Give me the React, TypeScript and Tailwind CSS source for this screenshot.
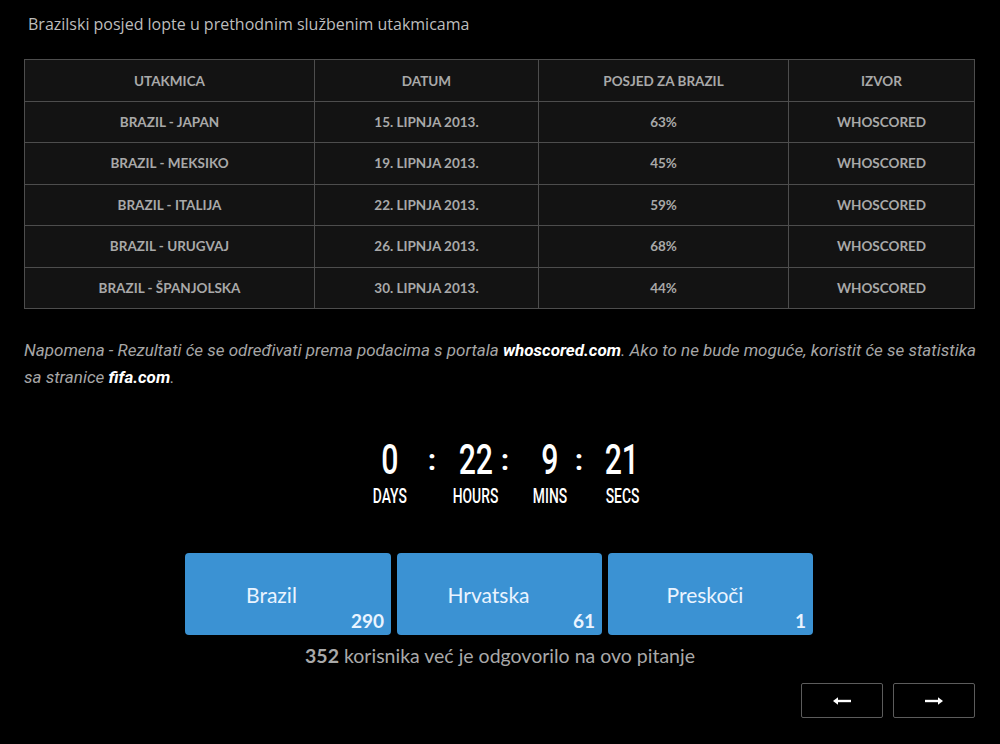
import React from "react";

const rows = [
  ["BRAZIL - JAPAN", "15. LIPNJA 2013.", "63%", "WHOSCORED"],
  ["BRAZIL - MEKSIKO", "19. LIPNJA 2013.", "45%", "WHOSCORED"],
  ["BRAZIL - ITALIJA", "22. LIPNJA 2013.", "59%", "WHOSCORED"],
  ["BRAZIL - URUGVAJ", "26. LIPNJA 2013.", "68%", "WHOSCORED"],
  ["BRAZIL - ŠPANJOLSKA", "30. LIPNJA 2013.", "44%", "WHOSCORED"],
];

function Unit({ value, label, w }: { value: string; label: string; w: string }) {
  return (
    <div className={`flex flex-col items-center ${w}`}>
      <div className="h-[42px] flex items-center">
        <span className="inline-block scale-x-[0.72] text-[42px] leading-none font-medium text-white" style={{ fontFamily: "Roboto, sans-serif" }}>
          {value}
        </span>
      </div>
      <div className="h-[30px] pt-[2px] flex items-center">
        <span className="inline-block scale-x-[0.66] text-[21px] leading-none font-medium text-white" style={{ fontFamily: "Roboto, sans-serif" }}>
          {label}
        </span>
      </div>
    </div>
  );
}

function Colon({ w }: { w: string }) {
  return (
    <div className={`flex justify-center ${w} h-[42px] items-center`}>
      <span className="text-[30px] leading-none font-bold text-white" style={{ fontFamily: "Roboto, sans-serif" }}>:</span>
    </div>
  );
}

function VoteButton({ label, count, w }: { label: string; count: string; w: string }) {
  return (
    <div className={`relative ${w} h-[82px] rounded-[4px] bg-[#3b92d3] flex items-center justify-center`}>
      <span className="text-[21px] text-[#eaf4ff] mt-[1px]">
        {label}
        <span className="invisible text-[19px] font-bold">{count}</span>
      </span>
      <span className="absolute right-[7px] bottom-[-1px] text-[19px] font-bold text-[#eaf4ff]">{count}</span>
    </div>
  );
}

export default function App() {
  return (
    <div className="w-[1000px] h-[744px] bg-black overflow-hidden" style={{ fontFamily: "Lato, sans-serif" }}>
      <div className="px-[24px]">
        <div className="pt-[12px] pl-[4px] h-[59px] text-[16px] text-[#bdbdbd]" style={{ fontFamily: "'Open Sans', sans-serif" }}>
          Brazilski posjed lopte u prethodnim službenim utakmicama
        </div>
        <table className="w-[951px] border-collapse bg-[#131313] text-[13.5px] font-bold text-[#a9a9a9]">
          <thead>
            <tr className="h-[42px]">
              <th className="w-[290px] border border-[#4d4d4d] text-center font-bold pt-[1px]">UTAKMICA</th>
              <th className="w-[224px] border border-[#4d4d4d] text-center font-bold pt-[1px]">DATUM</th>
              <th className="w-[250px] border border-[#4d4d4d] text-center font-bold pt-[1px]">POSJED ZA BRAZIL</th>
              <th className="border border-[#4d4d4d] text-center font-bold pt-[1px]">IZVOR</th>
            </tr>
          </thead>
          <tbody>
            {rows.map((r, i) => (
              <tr key={i} className="h-[41.4px]">
                {r.map((c, j) => (
                  <td key={j} className="border border-[#4d4d4d] text-center">{c}</td>
                ))}
              </tr>
            ))}
          </tbody>
        </table>
        <p className="mt-[28px] text-[17px] leading-[27px] italic text-[#a6a6a6]" style={{ fontFamily: "Roboto, sans-serif" }}>
          Napomena - Rezultati će se određivati prema podacima s portala <b className="text-white font-bold">whoscored.com</b>. Ako to ne bude moguće, koristit će se statistika sa stranice <b className="text-white font-bold">fifa.com</b>.
        </p>
      </div>

      <div className="mt-[48px] flex pl-[368px]">
        <Unit value="0" label="DAYS" w="w-[44px]" />
        <Colon w="w-[40px]" />
        <Unit value="22" label="HOURS" w="w-[48px]" />
        <Colon w="w-[10px]" />
        <div className="w-[16px]" />
        <Unit value="9" label="MINS" w="w-[48px]" />
        <Colon w="w-[10px]" />
        <div className="w-[14px]" />
        <Unit value="21" label="SECS" w="w-[48px]" />
      </div>

      <div className="mt-[42px] flex justify-center gap-[6px] pr-[2px]">
        <VoteButton label="Brazil" count="290" w="w-[206px]" />
        <VoteButton label="Hrvatska" count="61" w="w-[205px]" />
        <VoteButton label="Preskoči" count="1" w="w-[205px]" />
      </div>
      <div className="mt-[6px] text-center text-[19.5px] text-[#a9a9a9]">
        <b className="font-bold">352</b> korisnika već je odgovorilo na ovo pitanje
      </div>

      <div className="mt-[13px] flex justify-end gap-[10px] pr-[25px]">
        <div className="w-[82px] h-[35px] border border-[#5c5c5c] rounded-[2px] flex items-center justify-center">
          <svg width="20" height="10" viewBox="0 0 20 10"><path d="M19 5H4" stroke="white" strokeWidth="2.4" /><path d="M1 5L6 1.2V8.8Z" fill="white" /></svg>
        </div>
        <div className="w-[82px] h-[35px] border border-[#5c5c5c] rounded-[2px] flex items-center justify-center">
          <svg width="20" height="10" viewBox="0 0 20 10"><path d="M1 5H16" stroke="white" strokeWidth="2.4" /><path d="M19 5L14 1.2V8.8Z" fill="white" /></svg>
        </div>
      </div>
    </div>
  );
}
